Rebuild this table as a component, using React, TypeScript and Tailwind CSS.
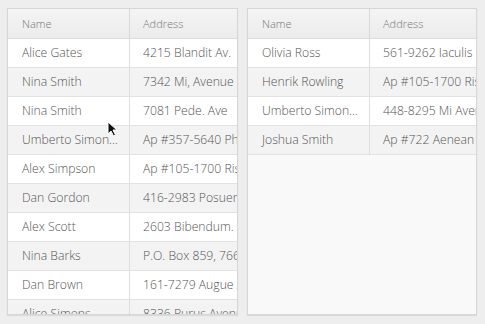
const left = [
  ["Alice Gates", "4215 Blandit Av."],
  ["Nina Smith", "7342 Mi, Avenue"],
  ["Nina Smith", "7081 Pede. Ave"],
  ["Umberto Simon...", "Ap #357-5640 Pharetra Rd."],
  ["Alex Simpson", "Ap #105-1700 Risus St."],
  ["Dan Gordon", "416-2983 Posuere Rd."],
  ["Alex Scott", "2603 Bibendum. Rd."],
  ["Nina Barks", "P.O. Box 859, 7669 Nunc Rd."],
  ["Dan Brown", "161-7279 Augue Ave"],
  ["Alice Simons", "8336 Purus Avenue"],
];

const right = [
  ["Olivia Ross", "561-9262 Iaculis Rd."],
  ["Henrik Rowling", "Ap #105-1700 Risus St."],
  ["Umberto Simon...", "448-8295 Mi Avenue"],
  ["Joshua Smith", "Ap #722 Aenean Ave"],
];

function Grid({ rows, width }: { rows: string[][]; width: string }) {
  return (
    <div className={`h-[307px] ${width} overflow-hidden border border-[#d6d6d6] bg-[#f9f9f9] shadow-[0_1px_1px_rgba(0,0,0,0.08)]`}>
      <div className="flex h-[30px] w-[300px] border-b border-[#dcdcdc] bg-gradient-to-b from-[#f4f4f4] to-[#ececec] text-[11px] text-[#777]">
        <div className="flex w-[122px] shrink-0 items-center border-r border-[#d9d9d9] pl-[14px] pt-[2px]">Name</div>
        <div className="flex items-center whitespace-nowrap pl-[13px] pt-[2px]">Address</div>
      </div>
      {rows.map((r, i) => (
        <div
          key={i}
          className={`flex h-[29px] w-[300px] border-b border-[#e2e2e2] text-[12.2px] text-[#555] ${i % 2 === 0 ? "bg-white" : "bg-[#f3f3f3]"}`}
        >
          <div className="flex w-[122px] shrink-0 items-center overflow-hidden whitespace-nowrap border-r border-[#dddddd] pl-[14px]">{r[0]}</div>
          <div className="flex items-center whitespace-nowrap pl-[13px]">{r[1]}</div>
        </div>
      ))}
    </div>
  );
}

export default function App() {
  return (
    <div className="relative h-[324px] w-[485px] bg-[#eeeeee] pl-[7px] pt-[8px] font-['Open_Sans',sans-serif] font-light">
      <div className="flex gap-[9px]">
        <Grid rows={left} width="w-[231px]" />
        <Grid rows={right} width="w-[230px]" />
      </div>
      <svg className="absolute left-[107px] top-[121px]" width="11" height="16" viewBox="0 0 11 16">
        <path d="M1 1 L1 13 L4 10 L6.5 15 L8.5 14 L6 9 L10 9 Z" fill="#111" stroke="#fff" strokeWidth="1" />
      </svg>
    </div>
  );
}
